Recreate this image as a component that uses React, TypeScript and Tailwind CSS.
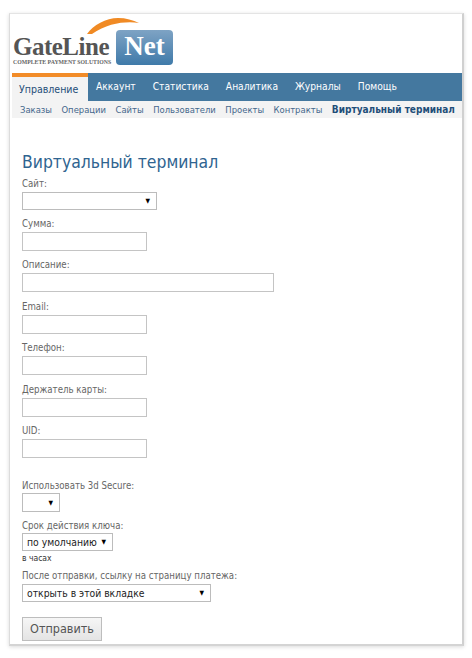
const font = "font-['DejaVu_Sans_Condensed','DejaVu_Sans',sans-serif] font-stretch-condensed";

function Field({ label, className, gap, children }: { label: string; className: string; gap: string; children?: React.ReactNode }) {
  return (
    <div className={className}>
      <div className={`${gap} text-[9.6px] leading-[14px] text-[#666]`}>{label}</div>
      {children}
    </div>
  );
}

function TextBox({ w }: { w: string }) {
  return <div className={`${w} h-[19px] border border-[#c4c4c4] bg-white`} />;
}

function Select({ w, h, text }: { w: string; h: string; text?: string }) {
  return (
    <div className={`${w} ${h} flex items-center justify-between whitespace-nowrap border border-[#bcbcbc] bg-white pl-[4px] pr-[6px] pt-[1px] text-[10.3px] text-[#222]`}>
      <span>{text}</span>
      <span className="text-[6.5px] leading-none text-black">▼</span>
    </div>
  );
}

export default function App() {
  const tabs = ["Аккаунт", "Статистика", "Аналитика", "Журналы", "Помощь"];
  const subs = ["Заказы", "Операции", "Сайты", "Пользователи", "Проекты", "Контракты"];
  return (
    <div className={`${font} h-[658px] w-[472px] overflow-hidden bg-white pl-[9px] pt-[13px]`}>
      <div className="h-[633px] w-[455px] border-r-2 border-b-2 border-l border-t border-r-[#d0d0d0] border-b-[#d4d4d4] border-l-[#dcdcdc] border-t-[#e4e4e4] bg-white pl-[2px] shadow-[0_1px_4px_rgba(0,0,0,0.15)]">
        <div className="relative h-[59px]">
          <svg className="absolute left-[74px] top-[3px]" width="56" height="20" viewBox="0 0 56 20">
            <path d="M1 17 C 7 8 20 1 32 1 C 40 1 47 3 53 6 C 40 4 22 6 6 17 Z" fill="#f08a24" />
          </svg>
          <div className="absolute left-[1px] top-[18px] whitespace-nowrap font-['Liberation_Serif',serif] text-[25px] font-bold font-stretch-normal leading-[30px] tracking-[-0.5px] text-[#555]">GateLine</div>
          <div className="absolute left-[1px] top-[44px] whitespace-nowrap font-['Liberation_Serif',serif] text-[5.8px] font-bold font-stretch-normal leading-[8px] text-[#666]">COMPLETE PAYMENT SOLUTIONS</div>
          <div className="absolute left-[104px] top-[16px] flex h-[35px] w-[57px] justify-center rounded-[4px] bg-gradient-to-b from-[#7ea3c4] to-[#3f7aa9] font-['Liberation_Serif',serif] text-[27px] font-bold font-stretch-normal leading-[32px] text-white">Net</div>
        </div>
        <div className="flex h-[28px] bg-[#44789f]">
          <div className="h-full w-[76px] whitespace-nowrap border-t-[4px] border-[#f28c28] bg-[#f3f3f3] pl-[7px] text-[10.5px] leading-[24px] text-[#1f4e79]">Управление</div>
          <div className="flex gap-[17px] whitespace-nowrap pl-[8px] pt-[6px] text-[10.2px] leading-[16px] text-white">
            {tabs.map((t) => <span key={t}>{t}</span>)}
          </div>
        </div>
        <div className="flex h-[17px] gap-[9.5px] whitespace-nowrap bg-[#f3f3f3] pl-[8px] text-[9.4px] leading-[17px] text-[#44678c]">
          {subs.map((s) => <span key={s}>{s}</span>)}
          <span className="text-[10px] font-bold text-[#1f4e79]">Виртуальный терминал</span>
        </div>
        <div className="pl-[10px] pt-[33px]">
          <h1 className="text-[17.4px] font-normal leading-[22px] text-[#2f6490]">Виртуальный терминал</h1>
          <Field label="Сайт:" className="mt-[4px]" gap="mb-[1px]"><Select w="w-[135px]" h="h-[18px]" /></Field>
          <Field label="Сумма:" className="mt-[7px]" gap="mb-[1px]"><TextBox w="w-[125px]" /></Field>
          <Field label="Описание:" className="mt-[7px]" gap="mb-[1px]"><TextBox w="w-[252px]" /></Field>
          <Field label="Email:" className="mt-[8px]" gap="mb-[1px]"><TextBox w="w-[125px]" /></Field>
          <Field label="Телефон:" className="mt-[7px]" gap="mb-[1px]"><TextBox w="w-[125px]" /></Field>
          <Field label="Держатель карты:" className="mt-[8px]" gap="mb-[1px]"><TextBox w="w-[125px]" /></Field>
          <Field label="UID:" className="mt-[7px]" gap="mb-[1px]"><TextBox w="w-[125px]" /></Field>
          <Field label="Использовать 3d Secure:" className="mt-[20px]" gap="pt-[1px]"><Select w="w-[38px]" h="h-[19px]" /></Field>
          <Field label="Срок действия ключа:" className="mt-[6px]" gap="pt-[1px]"><Select w="w-[91px]" h="h-[18px]" text="по умолчанию" /></Field>
          <div className="mt-[1px] text-[8.5px] leading-[12px] text-[#333]">в часах</div>
          <Field label="После отправки, ссылку на страницу платежа:" className="mt-[4px]" gap="pt-[1px] mb-[1px]"><Select w="w-[189px]" h="h-[18px]" text="открыть в этой вкладке" /></Field>
          <button className="mt-[15px] h-[24px] w-[80px] border border-[#bdbdbd] bg-gradient-to-b from-[#f6f6f6] to-[#e4e4e4] text-[12.5px] leading-[20px] text-[#555]">Отправить</button>
        </div>
      </div>
    </div>
  );
}
